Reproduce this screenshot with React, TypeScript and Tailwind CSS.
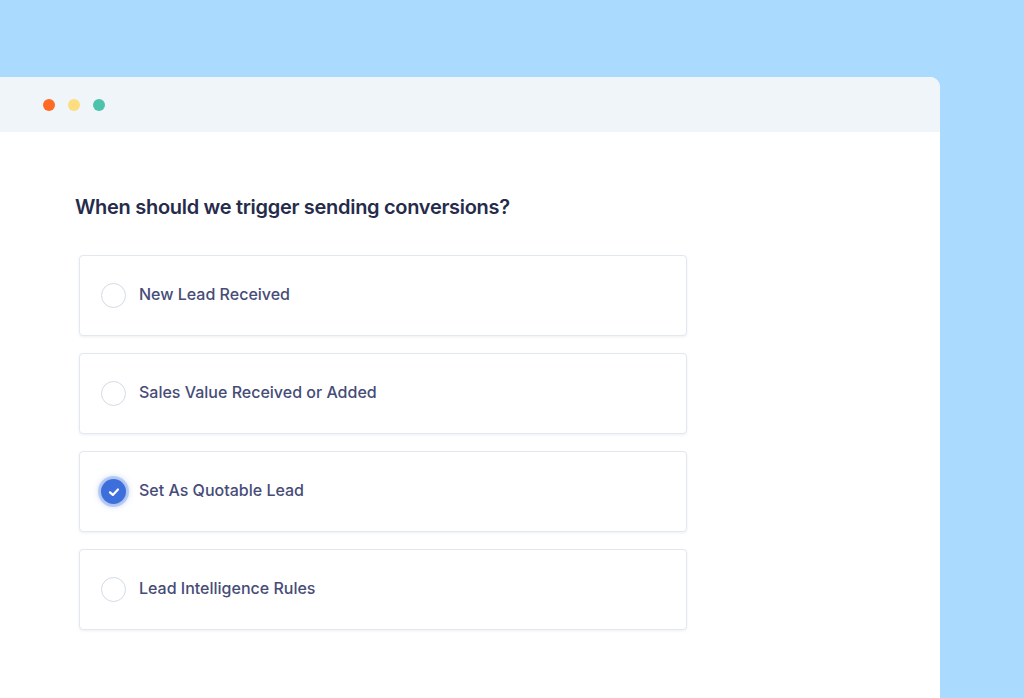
import React, { useState } from 'react';

const options = [
  'New Lead Received',
  'Sales Value Received or Added',
  'Set As Quotable Lead',
  'Lead Intelligence Rules',
];

function Radio({ checked }: { checked: boolean }) {
  if (checked) {
    return (
      <span className="w-[25px] h-[25px] rounded-full bg-[#3d6fdc] flex items-center justify-center shadow-[0_0_0_3px_rgba(61,111,220,0.25),0_0_6px_2px_rgba(61,111,220,0.35)]">
        <svg width="14" height="14" viewBox="0 0 12 12" fill="none">
          <path d="M2.6 6.3 5 8.5 9.4 3.9" stroke="white" strokeWidth="1.9" strokeLinecap="round" strokeLinejoin="round" />
        </svg>
      </span>
    );
  }
  return <span className="w-[25px] h-[25px] rounded-full border-[1.5px] border-[#d3dbe5] bg-white" />;
}

export default function App() {
  const [selected, setSelected] = useState(2);

  return (
    <div className="w-[1024px] h-[698px] bg-[#aadbff] pt-[77px] overflow-hidden" style={{ fontFamily: 'Inter, "Noto Sans", sans-serif' }}>
      <div className="w-[940px] h-full bg-white rounded-tr-[10px] overflow-hidden">
        <div className="h-[55px] bg-[#f0f5fa] flex items-center gap-[13px] pl-[43px]">
          <span className="w-3 h-3 rounded-full bg-[#ff6a24]" />
          <span className="w-3 h-3 rounded-full bg-[#fcdd7f]" />
          <span className="w-3 h-3 rounded-full bg-[#4cc4ac]" />
        </div>
        <div className="pl-[75px] pt-[61px]">
          <h1 className="text-[20px] leading-[28px] font-semibold text-[#262b4b] tracking-[-0.3px]">
            When should we trigger sending conversions?
          </h1>
          <div className="mt-[34px] ml-[4px] w-[608px] flex flex-col gap-[17px]">
            {options.map((o, i) => (
              <button
                key={o}
                onClick={() => setSelected(i)}
                className="h-[81px] bg-white border border-[#e3e8ef] rounded-[4px] shadow-[0_1px_3px_rgba(30,50,90,0.08)] flex items-center pl-[21px] gap-[13px] text-left"
              >
                <Radio checked={selected === i} />
                <span className="text-[16px] font-medium text-[#464c77] mb-[3px]">{o}</span>
              </button>
            ))}
          </div>
        </div>
      </div>
    </div>
  );
}
